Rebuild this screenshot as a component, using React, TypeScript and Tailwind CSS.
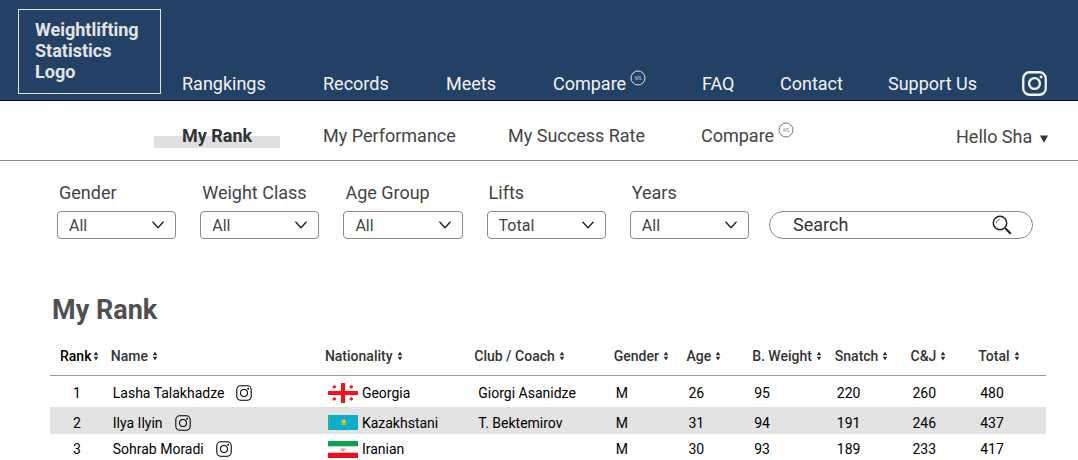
import { ReactNode } from "react";

const navItems: { label: string; badge?: boolean }[] = [
  { label: "Rangkings" },
  { label: "Records" },
  { label: "Meets" },
  { label: "Compare", badge: true },
  { label: "FAQ" },
  { label: "Contact" },
  { label: "Support Us" },
];

const filters = [
  { id: "gender", label: "Gender", options: ["All", "Men", "Women"] },
  { id: "weight-class", label: "Weight Class", options: ["All"] },
  { id: "age-group", label: "Age Group", options: ["All"] },
  { id: "lifts", label: "Lifts", options: ["Total", "Snatch", "C&J"] },
  { id: "years", label: "Years", options: ["All"] },
];

const columns = [
  { label: "Rank", width: "w-[6.1%]" },
  { label: "Name", width: "w-[21.5%]" },
  { label: "Nationality", width: "w-[15%]" },
  { label: "Club / Coach", width: "w-[14%]" },
  { label: "Gender", width: "w-[7.3%]" },
  { label: "Age", width: "w-[6.6%]" },
  { label: "B. Weight", width: "w-[8.3%]" },
  { label: "Snatch", width: "w-[7.6%]" },
  { label: "C&J", width: "w-[6.8%]" },
  { label: "Total", width: "w-[6.8%]" },
];

function Instagram({ className, stroke }: { className: string; stroke: number }) {
  return (
    <svg viewBox="0 0 24 24" className={className} fill="none" stroke="currentColor" strokeWidth={stroke} aria-hidden="true">
      <rect x="1.2" y="1.2" width="21.6" height="21.6" rx="6" />
      <circle cx="12" cy="12" r="5.2" />
      <circle cx="18.3" cy="5.7" r="1.4" fill="currentColor" stroke="none" />
    </svg>
  );
}

function WsBadge() {
  return (
    <svg viewBox="0 0 16 16" className="size-4 shrink-0" aria-hidden="true">
      <circle cx="8" cy="8" r="7" fill="none" stroke="currentColor" strokeWidth="0.9" />
      <text x="8" y="9.6" textAnchor="middle" fontSize="4.5" fill="currentColor" opacity="0.75">
        WS
      </text>
    </svg>
  );
}

function SortIcon() {
  return (
    <svg viewBox="0 0 6 10" className="h-2.5 w-1.5 shrink-0" fill="#333" aria-hidden="true">
      <path d="M3 0.6 5.3 4.3H0.7zM3 9.4 0.7 5.7h4.6z" />
    </svg>
  );
}

function GeorgiaFlag() {
  return (
    <svg viewBox="0 0 30 20" className="h-5 w-[30px] shrink-0" aria-hidden="true">
      <rect width="30" height="20" fill="#fff" />
      <path d="M13 0h4v8h13v4H17v8h-4v-8H0V8h13z" fill="#fb0d1b" />
      <g fill="#fb0d1b">
        <path d="M5.3 2.2h2l-.3 1 1-.3v2l-1-.3.3 1h-2l.3-1-1 .3v-2l1 .3z" />
        <path d="M22.3 2.2h2l-.3 1 1-.3v2l-1-.3.3 1h-2l.3-1-1 .3v-2l1 .3z" />
        <path d="M5.3 14.2h2l-.3 1 1-.3v2l-1-.3.3 1h-2l.3-1-1 .3v-2l1 .3z" />
        <path d="M22.3 14.2h2l-.3 1 1-.3v2l-1-.3.3 1h-2l.3-1-1 .3v-2l1 .3z" />
      </g>
    </svg>
  );
}

function KazakhstanFlag() {
  return (
    <svg viewBox="0 0 30 15" className="h-[15px] w-[30px] shrink-0" aria-hidden="true">
      <rect width="30" height="15" fill="#0aaecb" />
      <path d="M1.5 0.5v14" stroke="#6fc04a" strokeWidth="1.2" strokeDasharray="1.5 0.8" />
      <circle cx="15.8" cy="6.6" r="2.2" fill="#f3c614" />
      <path d="M11.3 7.6c.6 1.7 2.4 2.4 4.5 2.7 2.1-.3 3.9-1 4.5-2.7-.9 1.2-2.4 1.8-4.5 1.9-2.1-.1-3.6-.7-4.5-1.9z" fill="#cfc32c" />
    </svg>
  );
}

function IranFlag() {
  return (
    <svg viewBox="0 0 30 17" className="h-[17px] w-[30px] shrink-0" aria-hidden="true">
      <rect width="30" height="17" fill="#fff" />
      <rect width="30" height="5.3" fill="#0aa14c" />
      <rect y="11.7" width="30" height="5.3" fill="#ea0f1c" />
      <path d="M13 7.3c-.6 1.4.2 2.4 2 2.7 1.8-.3 2.6-1.3 2-2.7M15 7v3M14 7.4c-.3 1 0 1.7 1 2.2 1-.5 1.3-1.2 1-2.2" fill="none" stroke="#f0525a" strokeWidth="0.6" />
    </svg>
  );
}

type Athlete = {
  rank: number;
  name: string;
  flag: ReactNode;
  nationality: string;
  coach: string;
  gender: string;
  stats: number[];
  row: string;
};

const athletes: Athlete[] = [
  {
    rank: 1,
    name: "Lasha Talakhadze",
    flag: <GeorgiaFlag />,
    nationality: "Georgia",
    coach: "Giorgi Asanidze",
    gender: "M",
    stats: [26, 95, 220, 260, 480],
    row: "h-8 *:pt-1",
  },
  {
    rank: 2,
    name: "Ilya Ilyin",
    flag: <KazakhstanFlag />,
    nationality: "Kazakhstani",
    coach: "T. Bektemirov",
    gender: "M",
    stats: [31, 94, 191, 246, 437],
    row: "h-[27px] bg-[#e3e3e3] *:pt-1",
  },
  {
    rank: 3,
    name: "Sohrab Moradi",
    flag: <IranFlag />,
    nationality: "Iranian",
    coach: "",
    gender: "M",
    stats: [30, 93, 189, 233, 417],
    row: "h-[26px] *:pt-1",
  },
];

export default function App() {
  return (
    <div className="min-w-[900px] bg-white font-['Roboto',sans-serif] text-[#333]">
      <header className="flex h-[101px] items-end border-b border-[#04044f] bg-[#234065] pr-[31px] pl-[18px] text-lg leading-6 text-[#f4f4f4]">
        <a href="#home" className="mb-1.5 h-[85px] w-[143px] shrink-0 border border-[#e4e4e4] py-[9px] pl-4 text-lg leading-[21px] font-bold text-[#e4e4e4]">
          Weightlifting
          <br />
          Statistics
          <br />
          Logo
        </a>
        <nav
          aria-label="Main"
          className="ml-[21px] grid flex-1 grid-cols-[141fr_123fr_107fr_149fr_78fr_108fr_134fr_24fr] items-end pb-1"
        >
          {navItems.map((item) => (
            <a key={item.label} href={"#" + item.label} className="flex whitespace-nowrap">
              <span>{item.label}</span>
              {item.badge && (
                <span className="-mt-1 ml-1 pt-0.5">
                  <WsBadge />
                </span>
              )}
            </a>
          ))}
          <a href="#instagram" aria-label="Instagram">
            <Instagram className="size-[25px]" stroke={2.2} />
          </a>
        </nav>
      </header>

      <nav
        aria-label="Profile"
        className="grid h-[60px] grid-cols-[141fr_185fr_193fr_255fr_122fr] items-center border-b border-[#8a8a8a] pt-2.5 pl-[182px] text-lg leading-6"
      >
        <a href="#my-rank" aria-current="page" className="relative z-0 w-fit font-bold">
          <span className="absolute -inset-x-7 top-3 -z-10 h-3 bg-[#e0e0e0]" />
          My Rank
        </a>
        <a href="#my-performance" className="text-[#444]">
          My Performance
        </a>
        <a href="#my-success-rate" className="text-[#444]">
          My Success Rate
        </a>
        <a href="#compare" className="flex text-[#444]">
          <span>Compare</span>
          <span className="-mt-1 ml-1 pt-0.5 text-[#666]">
            <WsBadge />
          </span>
        </a>
        <button type="button" className="flex items-center gap-2 pt-0.5 text-left text-[#444]">
          Hello Sha
          <svg viewBox="0 0 8 8" className="mt-1 size-2" fill="#333" aria-hidden="true">
            <path d="M0 0.5h8L4 7.8z" />
          </svg>
        </button>
      </nav>

      <form className="grid grid-cols-[692fr_264fr] items-end gap-5 pt-5 pr-[45px] pl-[57px]">
        <div className="grid grid-cols-5 gap-6">
          {filters.map((filter) => (
            <div key={filter.id}>
              <label htmlFor={filter.id} className="block pb-1.5 pl-0.5 text-lg leading-6 text-[#444]">
                {filter.label}
              </label>
              <div className="relative">
                <select
                  id={filter.id}
                  className="block h-7 w-full appearance-none rounded border border-[#888] bg-white pt-0.5 pl-[11px] text-base leading-6 text-[#444]"
                >
                  {filter.options.map((option) => (
                    <option key={option}>{option}</option>
                  ))}
                </select>
                <svg viewBox="0 0 12 8" className="pointer-events-none absolute top-2.5 right-3 h-2 w-3" fill="none" stroke="#222" strokeWidth="1.4" aria-hidden="true">
                  <path d="M0.5 0.8 6 6.8l5.5-6" />
                </svg>
              </div>
            </div>
          ))}
        </div>
        <div className="flex h-7 items-center rounded-full border border-[#888] pr-5 pl-[23px]">
          <input
            type="text"
            aria-label="Search"
            placeholder="Search"
            className="w-0 flex-1 bg-transparent text-lg leading-6 outline-none placeholder:text-[#333]"
          />
          <button type="submit" aria-label="Search">
            <svg viewBox="0 0 20 20" className="size-5" fill="none" stroke="#222" aria-hidden="true">
              <circle cx="8" cy="8" r="6.7" strokeWidth="1.5" />
              <path d="M4.5 8.2C4.6 6 5.8 4.7 7.8 4.5" strokeWidth="0.7" />
              <path d="m12.8 12.8 1.500 1.500" strokeWidth="1.2" />
              <path d="m14.2 14.2 4 4" strokeWidth="2.2" strokeLinecap="round" />
            </svg>
          </button>
        </div>
      </form>

      <main className="pt-[55px] pr-8 pl-[50px]">
        <h1 className="pl-0.5 text-[27px] leading-8 font-bold text-[#505050]">My Rank</h1>
        <table className="mt-3 w-full table-fixed border-collapse text-left text-sm leading-5 text-black">
          <thead>
            <tr className="h-[37px] border-b border-[#999]">
              {columns.map((column, i) => (
                <th
                  key={column.label}
                  scope="col"
                  className={column.width + " p-0 font-medium " + (i === 0 ? "pl-2.5 text-black" : "text-[#333]")}
                >
                  <button type="button" className={"flex items-center whitespace-nowrap " + (i === 0 ? "gap-0.5" : "gap-1")}>
                    {column.label}
                    <SortIcon />
                  </button>
                </th>
              ))}
            </tr>
          </thead>
          <tbody>
            {athletes.map((athlete) => (
              <tr key={athlete.rank} className={athlete.row}>
                <td className="pr-[7px] text-center">{athlete.rank}</td>
                <td>
                  <div className="flex items-center gap-3 pl-0.5">
                    {athlete.name}
                    <a href="#profile" aria-label={athlete.name + " on Instagram"}>
                      <Instagram className="size-4" stroke={1.6} />
                    </a>
                  </div>
                </td>
                <td>
                  <div className="flex items-center gap-1 pl-[3px]">
                    {athlete.flag}
                    {athlete.nationality}
                  </div>
                </td>
                <td className="pl-1">{athlete.coach}</td>
                <td className="pl-0.5">{athlete.gender}</td>
                {athlete.stats.map((value, i) => (
                  <td key={i} className="pl-0.5">
                    {value}
                  </td>
                ))}
              </tr>
            ))}
          </tbody>
        </table>
      </main>
    </div>
  );
}
